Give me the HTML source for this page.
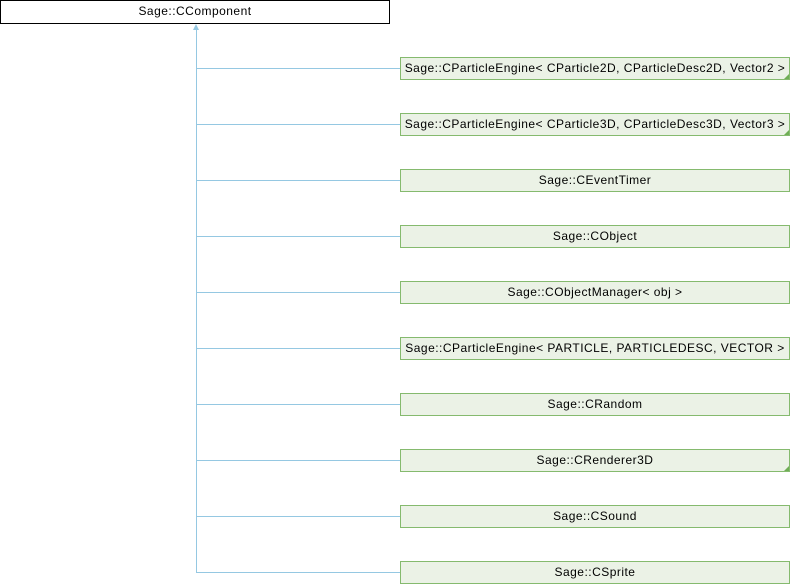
<!DOCTYPE html><html><head><style>
body{margin:0;width:790px;height:584px;background:#fff;position:relative;overflow:hidden;font-family:"Liberation Sans",sans-serif;font-size:12px;color:#000;letter-spacing:0.48px}
.b{position:absolute;box-sizing:border-box;height:23px;line-height:21px;text-align:center;white-space:nowrap}
.g{left:400px;width:390px;background:#ebf2e6;border:1px solid #85ba6e}
.t{left:0;top:0;width:390px;height:24px;border:1px solid #000;background:#fff}
.h{position:absolute;left:196px;width:204px;height:1px;background:#95c8e2}
.c::after{content:"";position:absolute;right:0;bottom:0;border-left:5px solid transparent;border-bottom:5px solid #6fae55}
</style></head><body>
<div class="b t">Sage::CComponent</div>
<div style="position:absolute;left:196px;top:28px;width:1px;height:545px;background:#95c8e2"></div>
<div style="position:absolute;left:193px;top:24px;border-left:3.5px solid transparent;border-right:3.5px solid transparent;border-bottom:6px solid #95c8e2"></div>
<div class="h" style="top:68px"></div><div class="b g c" style="top:57px">Sage::CParticleEngine&lt; CParticle2D, CParticleDesc2D, Vector2 &gt;</div>
<div class="h" style="top:124px"></div><div class="b g c" style="top:113px">Sage::CParticleEngine&lt; CParticle3D, CParticleDesc3D, Vector3 &gt;</div>
<div class="h" style="top:180px"></div><div class="b g" style="top:169px">Sage::CEventTimer</div>
<div class="h" style="top:236px"></div><div class="b g" style="top:225px">Sage::CObject</div>
<div class="h" style="top:292px"></div><div class="b g" style="top:281px">Sage::CObjectManager&lt; obj &gt;</div>
<div class="h" style="top:348px"></div><div class="b g" style="top:337px">Sage::CParticleEngine&lt; PARTICLE, PARTICLEDESC, VECTOR &gt;</div>
<div class="h" style="top:404px"></div><div class="b g" style="top:393px">Sage::CRandom</div>
<div class="h" style="top:460px"></div><div class="b g c" style="top:449px">Sage::CRenderer3D</div>
<div class="h" style="top:516px"></div><div class="b g" style="top:505px">Sage::CSound</div>
<div class="h" style="top:572px"></div><div class="b g" style="top:561px">Sage::CSprite</div>
</body></html>
